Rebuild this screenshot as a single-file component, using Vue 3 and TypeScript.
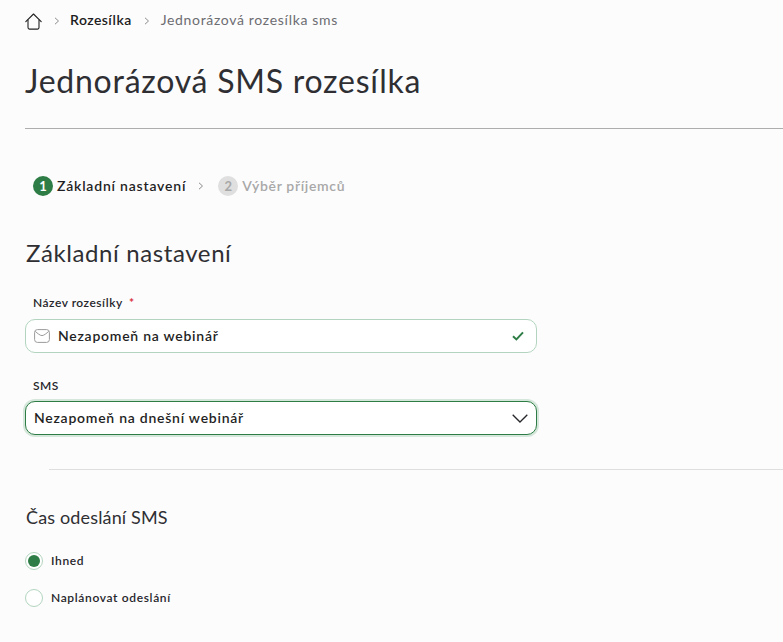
<script setup lang="ts">
const crumbs = ['Rozesílka', 'Jednorázová rozesílka sms']
</script>

<template>
  <div class="page">
    <nav class="breadcrumb">
      <svg class="home" viewBox="0 0 17 17" width="17" height="17" fill="none">
        <path d="M0.8 8.6 8.5 1 16.2 8.6" />
        <path d="M3 7V14.6A1.5 1.5 0 0 0 4.5 16.1H12.5A1.5 1.5 0 0 0 14 14.6V7" />
      </svg>
      <template v-for="(c, i) in crumbs" :key="c">
        <svg class="sep" viewBox="0 0 6 8" width="6" height="8" fill="none"><path d="M1 .8 4.5 4 1 7.2" /></svg>
        <span :class="i === 0 ? 'crumb-link' : 'crumb-current'">{{ c }}</span>
      </template>
    </nav>

    <h1 class="title">Jednorázová SMS rozesílka</h1>
    <hr class="title-rule" />

    <div class="steps">
      <span class="step-num active">1</span>
      <span class="step-label active">Základní nastavení</span>
      <svg class="step-sep" viewBox="0 0 6 8" width="6" height="8" fill="none"><path d="M1 .8 4.5 4 1 7.2" /></svg>
      <span class="step-num">2</span>
      <span class="step-label">Výběr příjemců</span>
    </div>

    <h2 class="section-title">Základní nastavení</h2>

    <form class="form">
      <label class="field-label">Název rozesílky <span class="req">*</span></label>
      <div class="input valid">
        <svg class="mail" viewBox="0 0 16 14" width="16" height="14" fill="none">
          <rect x="0.6" y="0.6" width="14.8" height="12.8" rx="2.8" />
          <path d="M1.2 2.4C3.5 4.2 6 6.6 8 6.6S12.5 4.2 14.8 2.4" />
        </svg>
        <span class="value">Nezapomeň na webinář</span>
        <svg class="check" viewBox="0 0 12 10" width="12" height="10" fill="none"><path d="M1 5.2 4.4 8.4 11 1.4" /></svg>
      </div>

      <label class="field-label sms-label">SMS</label>
      <div class="input select">
        <span class="value">Nezapomeň na dnešní webinář</span>
        <svg class="chevron" viewBox="0 0 16 9" width="16" height="9" fill="none"><path d="M.7.7 8 8 15.3.7" /></svg>
      </div>
    </form>

    <hr class="divider" />

    <h3 class="time-title">Čas odeslání SMS</h3>
    <div class="radio-row first">
      <span class="radio checked"></span>
      <span class="radio-label">Ihned</span>
    </div>
    <div class="radio-row">
      <span class="radio"></span>
      <span class="radio-label">Naplánovat odeslání</span>
    </div>
  </div>
</template>

<style>
html,
body {
  margin: 0;
  background: #fcfcfc;
  overflow: hidden;
}
</style>

<style scoped>
* {
  box-sizing: border-box;
}

.page {
  width: 783px;
  height: 642px;
  padding: 12px 0 0 25px;
  overflow: hidden;
  background: #fcfcfc;
  color: #2f2f33;
  font-family: Lato, "Noto Sans", sans-serif;
}

.breadcrumb {
  display: flex;
  align-items: center;
  height: 18px;
  font-size: 14px;
}

.home path {
  stroke: #222;
  stroke-width: 1.1;
  stroke-linecap: round;
  stroke-linejoin: round;
}

.sep {
  margin: 0 10px 0 12px;
}

.sep path,
.step-sep path {
  stroke: #8c8c8c;
  stroke-width: 1;
}

.crumb-link,
.crumb-current {
  margin-bottom: 3px;
}

.crumb-link {
  color: #1d1d22;
  font-weight: 600;
  letter-spacing: 0.45px;
}

.crumb-current {
  margin-left: 1px;
  color: #6d6d72;
  letter-spacing: 0.67px;
}

.title {
  margin: 29px 0 0;
  font-size: 32px;
  line-height: 44px;
  font-weight: 400;
  letter-spacing: 0.75px;
}

.title-rule {
  margin: 25px 0 0;
  border: 0;
  border-top: 1px solid #adadad;
}

.steps {
  display: flex;
  align-items: center;
  height: 20px;
  margin: 47px 0 0 8px;
  font-size: 14px;
  font-weight: 600;
}

.step-num {
  display: flex;
  align-items: center;
  justify-content: center;
  width: 20px;
  height: 20px;
  border-radius: 50%;
  background: #dfdfdf;
  color: #a8a8a8;
  font-size: 13px;
  font-weight: 700;
}

.step-num.active {
  background: #2e7d46;
  color: #fff;
}

.step-label {
  margin-left: 4px;
  margin-bottom: 1px;
  color: #a8a8a8;
  letter-spacing: 0.65px;
}

.step-label.active {
  color: #1f1f24;
  letter-spacing: 0.8px;
}

.step-sep {
  margin: 0 14px 0 12px;
}

.section-title {
  margin: 41px 0 0 1px;
  font-size: 24px;
  line-height: 32px;
  font-weight: 400;
  letter-spacing: 0.6px;
}

.form {
  display: flex;
  flex-direction: column;
  width: 512px;
  margin-top: 26px;
}

.field-label {
  margin-left: 8px;
  font-size: 12px;
  line-height: 16px;
  font-weight: 600;
  color: #26262b;
  letter-spacing: 0.5px;
}

.req {
  margin-left: 3px;
  color: #d9303e;
  font-weight: 700;
}

.input {
  display: flex;
  align-items: center;
  height: 34px;
  margin-top: 8px;
  padding: 0 12px 0 8px;
  border: 1px solid #b3d5bf;
  border-radius: 10px;
  background: #fff;
  font-size: 14px;
  font-weight: 600;
  color: #1f1f24;
}

.value {
  flex: 1;
  margin-bottom: 2px;
  letter-spacing: 0.75px;
}

.mail {
  margin-right: 8px;
}

.mail rect,
.mail path {
  stroke: #9b9b9b;
  stroke-width: 1;
}

.check path {
  stroke: #2e7d46;
  stroke-width: 2;
}

.sms-label {
  margin-top: 25px;
}

.select {
  margin-top: 7px;
  border: 1px solid #2e7d46;
  box-shadow: 0 0 0 2px #d5e6da;
  padding-right: 8px;
}

.chevron path {
  stroke: #26262b;
  stroke-width: 1.3;
}

.divider {
  margin: 34px 0 0 24px;
  border: 0;
  border-top: 1px solid #dedede;
}

.time-title {
  margin: 35px 0 0 1px;
  font-size: 18px;
  line-height: 24px;
  font-weight: 400;
  letter-spacing: 0.15px;
}

.radio-row {
  display: flex;
  align-items: center;
  gap: 8px;
  height: 18px;
  margin-top: 19px;
  font-size: 12px;
  font-weight: 600;
  letter-spacing: 0.65px;
  color: #26262b;
}

.radio-row.first {
  margin-top: 23px;
}

.radio-label {
  margin-bottom: 2px;
}

.radio {
  display: flex;
  align-items: center;
  justify-content: center;
  width: 18px;
  height: 18px;
  border: 1px solid #b3d5bf;
  border-radius: 50%;
  background: #fff;
}

.radio.checked::after {
  content: "";
  width: 12px;
  height: 12px;
  border-radius: 50%;
  background: #2e7d46;
}
</style>
